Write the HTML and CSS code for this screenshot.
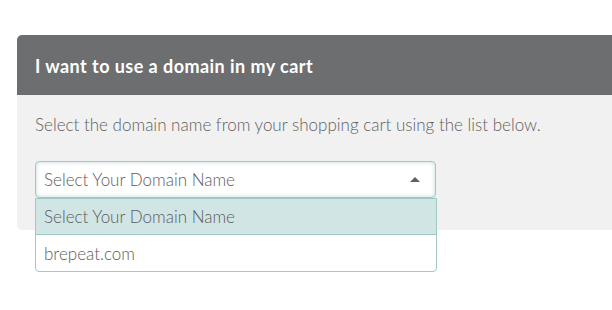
FILE: index.html
```html
<!DOCTYPE html>
<html>
<head>
<meta charset="utf-8">
<link rel="stylesheet" href="styles.css">
</head>
<body>
<div class="card">
  <div class="card-head">I want to use a domain in my cart</div>
  <div class="card-body">
    <p class="hint">Select the domain name from your shopping cart using the list below.</p>
    <div class="select-wrap">
      <div class="select">
        <span class="select-text">Select Your Domain Name</span>
        <span class="arrow"></span>
      </div>
      <ul class="options">
        <li class="option selected">Select Your Domain Name</li>
        <li class="option">brepeat.com</li>
      </ul>
    </div>
  </div>
</div>
</body>
</html>
```
FILE: styles.css
```css
* { box-sizing: border-box; }
html, body { min-height: 310px; }
body {
  margin: 0;
  background: #ffffff;
  font-family: "Lato", "Open Sans", sans-serif;
}
.card {
  margin: 35px 0 0 17px;
  border-radius: 5px 0 0 5px;
}
.card-head {
  height: 60px;
  background: #6d6e6f;
  border-radius: 5px 0 0 0;
  color: #ffffff;
  font-weight: 700;
  font-size: 18px;
  letter-spacing: 0.45px;
  display: flex;
  align-items: center;
  padding: 1px 0 0 18px;
}
.card-body {
  background: #f1f1f1;
  border-radius: 0 0 0 5px;
  height: 135px;
  padding: 19px 18px 0;
}
.hint {
  margin: 0;
  font-size: 17px;
  font-weight: 300;
  line-height: 22px;
  color: #5f5f5f;
}
.select-wrap {
  position: relative;
  z-index: 2;
  margin-top: 25px;
  width: 401px;
}
.select {
  height: 37px;
  border: 1px solid #9fc9c4;
  border-radius: 4px;
  background: #ffffff;
  box-shadow: inset 0 0 4px rgba(120, 170, 165, 0.45);
  display: flex;
  align-items: center;
  justify-content: space-between;
  padding: 0 15px 0 8px;
  font-size: 17px;
  font-weight: 300;
  color: #5c5c5c;
}
.arrow {
  width: 0;
  height: 0;
  border-left: 5px solid transparent;
  border-right: 5px solid transparent;
  border-bottom: 5px solid #5f6061;
}
.options {
  position: absolute;
  top: 37px;
  left: 0;
  width: 402px;
  margin: 0;
  padding: 0;
  list-style: none;
  border: 1px solid #9fc9c4;
  border-radius: 0 0 4px 4px;
  background: #ffffff;
}
.option {
  height: 36px;
  display: flex;
  align-items: center;
  padding-left: 8px;
  font-size: 17px;
  font-weight: 300;
  color: #5c5c5c;
}
.option.selected {
  background: #d1e5e5;
  border-bottom: 1px solid #9fc9c4;
}
```
